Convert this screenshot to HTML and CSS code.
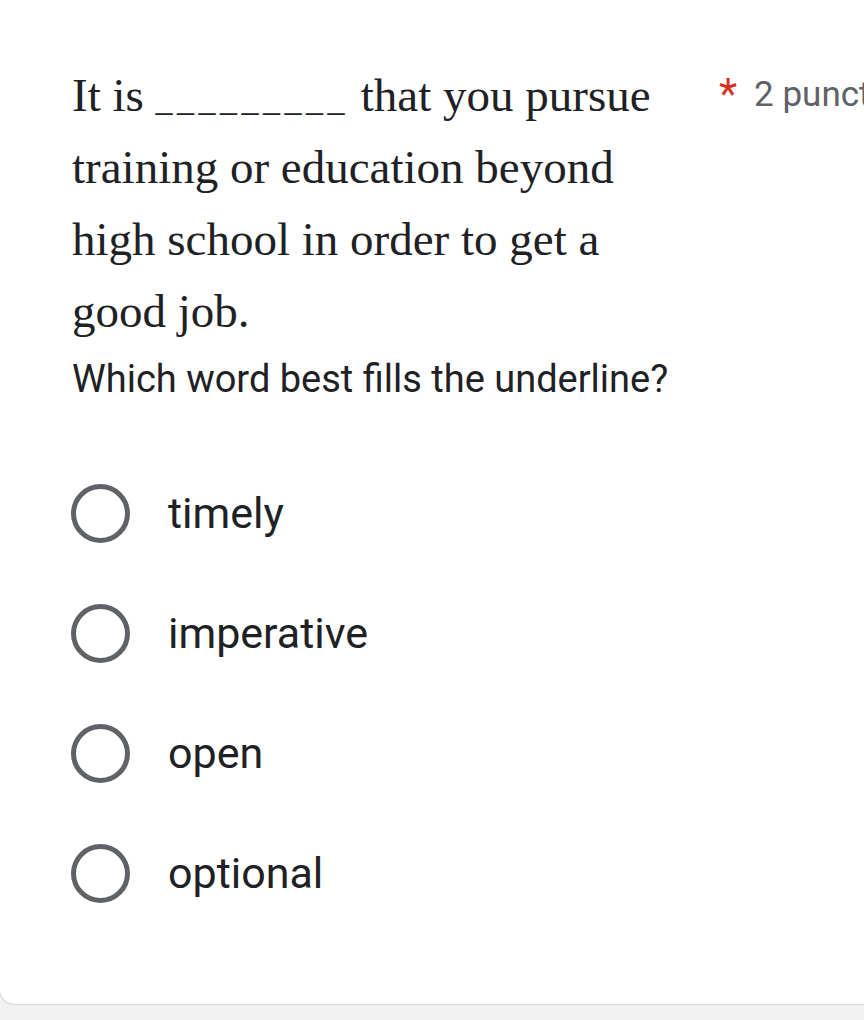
FILE: index.html
```html
<!DOCTYPE html>
<html lang="ro">
<head>
<meta charset="utf-8">
<title>Question</title>
<link rel="stylesheet" href="styles.css">
</head>
<body>
<div class="page">
  <section class="card">
    <div class="header">
      <h1 class="title">It is <span class="blank">_________</span> that you pursue training or education beyond high school in order to get a good job.</h1>
      <div class="meta">
        <span class="required">*</span>
        <span class="points">2 puncte</span>
      </div>
    </div>
    <p class="subtitle">Which word best fills the underline?</p>
    <ul class="options">
      <li class="option"><span class="radio"></span><span class="label">timely</span></li>
      <li class="option"><span class="radio"></span><span class="label">imperative</span></li>
      <li class="option"><span class="radio"></span><span class="label">open</span></li>
      <li class="option"><span class="radio"></span><span class="label">optional</span></li>
    </ul>
  </section>
</div>
</body>
</html>
```
FILE: styles.css
```css
html, body {
  margin: 0;
  padding: 0;
  background: #f1f1f1;
  overflow: hidden;
}
body {
  width: 864px;
  height: 1020px;
  font-family: Roboto, "Noto Sans", sans-serif;
  color: #202124;
}
.page {
  width: 864px;
  overflow: hidden;
}
.card {
  width: 900px;
  height: 1005px;
  margin-left: -1px;
  box-sizing: border-box;
  background: #ffffff;
  border: 1px solid #dadada;
  border-top: none;
  border-radius: 0 0 16px 16px;
  box-shadow: 0 1px 1px rgba(0,0,0,0.05);
  padding: 59px 0 0 72px;
}
.header {
  display: flex;
  align-items: flex-start;
}
.title {
  width: 620px;
  margin: 0;
  font-family: "Liberation Serif", "DejaVu Serif", serif;
  font-weight: normal;
  font-size: 47px;
  line-height: 72px;
  color: #202124;
}
.blank {
  font-size: 34px;
  line-height: 1;
  letter-spacing: 4.5px;
}
.meta {
  display: flex;
  align-items: flex-start;
  white-space: nowrap;
  margin-left: 27px;
}
.required {
  color: #d93025;
  font-size: 42px;
  line-height: 42px;
  margin-top: 14px;
  margin-right: 17px;
}
.points {
  color: #5f6368;
  font-size: 35px;
  line-height: 72px;
}
.subtitle {
  margin: 10px 0 0;
  font-size: 38px;
  line-height: 44px;
  color: #202124;
}
.options {
  list-style: none;
  margin: 52px 0 0 -1px;
  padding: 0;
}
.option {
  display: flex;
  align-items: center;
  height: 120px;
}
.radio {
  width: 49px;
  height: 49px;
  border: 5px solid #5f6368;
  border-radius: 50%;
  flex: none;
}
.label {
  margin-left: 38px;
  font-size: 43px;
  color: #202124;
}
```
